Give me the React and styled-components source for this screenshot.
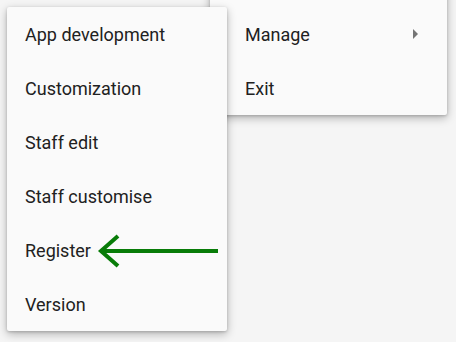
import React from "react";
import styled, { createGlobalStyle } from "styled-components";

const Global = createGlobalStyle`
  html, body { margin: 0; padding: 0; background: #f5f5f5; }
  body { font-family: Roboto, "Noto Sans", sans-serif; }
`;

const Stage = styled.div`
  position: relative;
  width: 456px;
  height: 342px;
  overflow: hidden;
  background: #f5f5f5;
`;

const Menu = styled.ul`
  position: absolute;
  margin: 0;
  padding: 0;
  list-style: none;
  background: #fafafa;
  border-radius: 2px;
  box-shadow: 0 3px 10px rgba(0, 0, 0, 0.28), 0 1px 3px rgba(0, 0, 0, 0.18);
`;

const MainMenu = styled(Menu)`
  left: 7px;
  top: 7px;
  width: 220px;
  z-index: 2;
`;

const SubMenu = styled(Menu)`
  left: 210px;
  top: -20px;
  width: 237px;
  padding-top: 27px;
  z-index: 1;
`;

const Item = styled.li`
  display: flex;
  align-items: center;
  justify-content: space-between;
  height: 54px;
  padding: 0 16px 0 ${(p) => p.$padLeft || 18}px;
  font-size: 18px;
  color: #212121;
  box-sizing: border-box;
`;

const Caret = styled.span`
  width: 0;
  height: 0;
  border-top: 5px solid transparent;
  border-bottom: 5px solid transparent;
  border-left: 5px solid #757575;
  margin-right: 13px;
`;

const Arrow = styled.svg`
  position: absolute;
  left: 95px;
  top: 230px;
  z-index: 3;
`;

const mainItems = [
  "App development",
  "Customization",
  "Staff edit",
  "Staff customise",
  "Register",
  "Version",
];

export default function App() {
  return (
    <Stage>
      <Global />
      <SubMenu>
        <Item $padLeft={35}>
          Manage
          <Caret />
        </Item>
        <Item $padLeft={35}>Exit</Item>
      </SubMenu>
      <MainMenu>
        {mainItems.map((t) => (
          <Item key={t}>{t}</Item>
        ))}
      </MainMenu>
      <Arrow width="130" height="42" viewBox="0 0 130 42">
        <g stroke="#087c08" strokeWidth="4" fill="none">
          <line x1="6" y1="21" x2="123" y2="21" />
          <polyline points="23,6 6,21 23,36" />
        </g>
      </Arrow>
    </Stage>
  );
}
